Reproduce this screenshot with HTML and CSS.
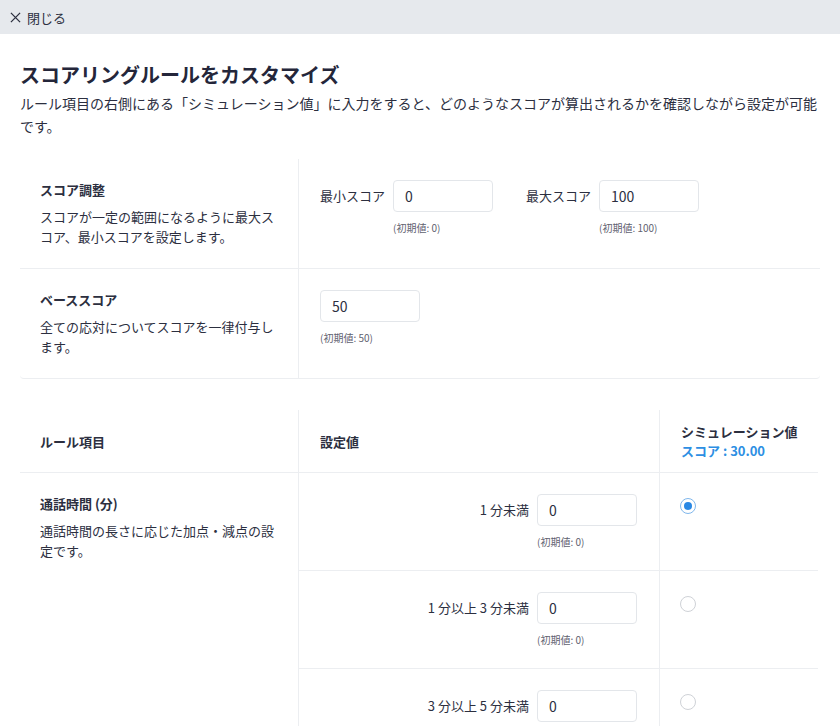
FILE: index.html
```html
<!DOCTYPE html>
<html lang="ja">
<head>
  <meta charset="UTF-8" />
  <meta name="viewport" content="width=device-width, initial-scale=1" />
  <title>スコアリングルールをカスタマイズ</title>
  <link rel="stylesheet" href="styles.css">
</head>
<body>
  <div class="topbar">
    <button class="close-btn" type="button">
      <svg viewBox="0 0 12 12" width="11" height="11" aria-hidden="true">
        <path d="M1 1L11 11M11 1L1 11" stroke="#2c2f3f" stroke-width="1.4" fill="none"/>
      </svg>
      閉じる
    </button>
  </div>

  <div class="content">
    <h1 class="title">スコアリングルールをカスタマイズ</h1>
    <p class="lead">ルール項目の右側にある「シミュレーション値」に入力をすると、どのようなスコアが算出されるかを確認しながら設定が可能です。</p>

    <div class="score-card">
      <div class="score-row">
        <div class="desc-cell">
          <h3>スコア調整</h3>
          <p>スコアが一定の範囲になるように最大スコア、最小スコアを設定します。</p>
        </div>
        <div class="input-cell">
          <div class="field">
            <label>最小スコア</label>
            <div class="input-wrap">
              <input type="text" value="0" />
              <span class="hint">(初期値: 0)</span>
            </div>
          </div>
          <div class="field">
            <label>最大スコア</label>
            <div class="input-wrap">
              <input type="text" value="100" />
              <span class="hint">(初期値: 100)</span>
            </div>
          </div>
        </div>
      </div>
      <div class="score-row">
        <div class="desc-cell">
          <h3>ベーススコア</h3>
          <p>全ての応対についてスコアを一律付与します。</p>
        </div>
        <div class="input-cell">
          <div class="field">
            <div class="input-wrap">
              <input type="text" value="50" />
              <span class="hint">(初期値: 50)</span>
            </div>
          </div>
        </div>
      </div>
    </div>

    <div class="rule-table">
      <div class="th th-first">ルール項目</div>
      <div class="th">設定値</div>
      <div class="th th-sim">
        <span>シミュレーション値</span>
        <span class="sim-score">スコア : 30.00</span>
      </div>

      <div class="rule-name">
        <h3>通話時間 (分)</h3>
        <p>通話時間の長さに応じた加点・減点の設定です。</p>
      </div>

      <div class="td value-cell">
        <div class="field">
          <label>1 分未満</label>
          <div class="input-wrap">
            <input type="text" value="0" />
            <span class="hint">(初期値: 0)</span>
          </div>
        </div>
      </div>
      <div class="td sim-cell"><span class="radio checked"></span></div>

      <div class="td value-cell">
        <div class="field">
          <label>1 分以上 3 分未満</label>
          <div class="input-wrap">
            <input type="text" value="0" />
            <span class="hint">(初期値: 0)</span>
          </div>
        </div>
      </div>
      <div class="td sim-cell"><span class="radio"></span></div>

      <div class="td value-cell">
        <div class="field">
          <label>3 分以上 5 分未満</label>
          <div class="input-wrap">
            <input type="text" value="0" />
            <span class="hint">(初期値: 0)</span>
          </div>
        </div>
      </div>
      <div class="td sim-cell"><span class="radio"></span></div>
    </div>
  </div>
</body>
</html>
```

FILE: styles.css
```css
body {
  margin: 0;
  font-family: "Noto Sans CJK JP", "Noto Sans", sans-serif;
  color: #2c2f3f;
  background: #fff;
  overflow: hidden;
}
.topbar {
  height: 34px;
  background: #e6e9ed;
  display: flex;
  align-items: center;
  padding: 0 10px;
}
.close-btn {
  display: flex;
  align-items: center;
  gap: 6px;
  border: none;
  background: none;
  padding: 0;
  font-family: inherit;
  font-size: 13px;
  color: #2c2f3f;
  cursor: pointer;
}
.content {
  padding: 27px 20px 0;
}
.title {
  margin: 0;
  font-size: 20px;
  line-height: 28px;
  font-weight: bold;
  color: #24263a;
}
.lead {
  margin: 3px 0 0;
  font-size: 14px;
  line-height: 23px;
}
.score-card {
  margin-top: 21px;
  border-bottom: 1px solid #eceef1;
  border-radius: 0 0 4px 4px;
}
.score-row {
  display: grid;
  grid-template-columns: 278px 1fr;
}
.score-row + .score-row {
  border-top: 1px solid #eceef1;
}
.desc-cell, .rule-name {
  padding: 21px 20px;
}
.desc-cell h3, .rule-name h3 {
  margin: 0;
  font-size: 13px;
  line-height: 20px;
  font-weight: bold;
}
.desc-cell p, .rule-name p {
  margin: 7px 0 0;
  font-size: 13px;
  line-height: 20px;
}
.input-cell {
  border-left: 1px solid #eceef1;
  padding: 21px 21px;
  display: flex;
  gap: 33px;
  align-items: flex-start;
}
.field {
  display: flex;
  gap: 8px;
  align-items: flex-start;
}
.field label {
  font-size: 13px;
  line-height: 32px;
  white-space: nowrap;
}
.input-wrap {
  display: flex;
  flex-direction: column;
  gap: 9px;
}
.input-wrap input {
  width: 100px;
  height: 32px;
  box-sizing: border-box;
  border: 1px solid #e3e6ea;
  border-radius: 4px;
  padding: 0 11px;
  font-family: inherit;
  font-size: 14px;
  color: #2c2f3f;
  outline: none;
}
.hint {
  font-size: 10px;
  line-height: 14px;
  color: #5f6270;
}
.rule-table {
  margin-top: 31px;
  display: grid;
  grid-template-columns: 278px 361px 159px;
}
.th {
  display: flex;
  flex-direction: column;
  justify-content: center;
  min-height: 62px;
  padding: 0 21px;
  font-size: 13px;
  line-height: 19px;
  font-weight: bold;
  border-left: 1px solid #eceef1;
  border-bottom: 1px solid #eceef1;
}
.th-first {
  border-left: none;
  padding-left: 20px;
}
.th-sim {
  padding-right: 0;
  white-space: nowrap;
}
.sim-score {
  color: #2d8fe3;
}
.rule-name {
  grid-row: span 3;
}
.td {
  border-left: 1px solid #eceef1;
  border-bottom: 1px solid #eceef1;
  padding: 21px 22px 21px 21px;
}
.value-cell {
  display: flex;
  justify-content: flex-end;
}
.sim-cell {
  padding-top: 25px;
  padding-left: 20px;
}
.radio {
  display: block;
  width: 16px;
  height: 16px;
  box-sizing: border-box;
  border: 1px solid #cfd2d7;
  border-radius: 50%;
  position: relative;
}
.radio.checked {
  border: 1.5px solid #7fb7ec;
}
.radio.checked::after {
  content: "";
  position: absolute;
  top: 2.5px;
  left: 2.5px;
  width: 8px;
  height: 8px;
  border-radius: 50%;
  background: #2a88e4;
}
```
